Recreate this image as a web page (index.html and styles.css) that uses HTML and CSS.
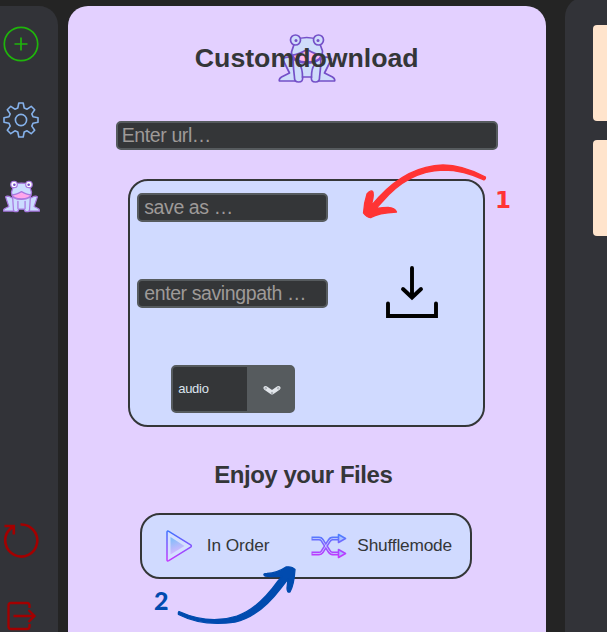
FILE: index.html
```html
<!DOCTYPE html>
<html lang="en">
<head>
<meta charset="utf-8">
<title>Customdownload</title>
<link rel="stylesheet" href="styles.css">
</head>
<body>
<svg class="defs" aria-hidden="true">
  <defs>
    <linearGradient id="violet" gradientUnits="userSpaceOnUse" x1="0" y1="0" x2="0" y2="30"><stop offset="0" stop-color="#3975ff"/><stop offset="1" stop-color="#c438ff"/></linearGradient>
    <linearGradient id="violet-short" gradientUnits="userSpaceOnUse" x1="0" y1="2" x2="0" y2="23"><stop offset="0" stop-color="#4b80ff"/><stop offset="1" stop-color="#c438ff"/></linearGradient>
    <linearGradient id="glow" x1="0" y1="0" x2="0.3" y2="1"><stop offset="0" stop-color="#77bdf8"/><stop offset="1" stop-color="#d9b8ff"/></linearGradient>
    <symbol id="frog" viewBox="0 0 57 49">
      <g fill="#cfdcfb" stroke="#7450c8" stroke-width="1.7" stroke-linejoin="round" stroke-linecap="round">
        <path d="M13 24C9 22 5 24 4 25l7 14-8 4q-3 2-2 4h17l1-17zM44 24c4-2 8 0 9 1l-7 14 8 4q3 2 2 4H39l-1-17z"/>
        <path d="M15 22c-1 10 1 19 1 22q0 4 4 4 5 0 4-5h9q-1 5 4 5 4 0 4-4c0-3 2-12 1-22z"/>
        <path d="M24 43c0-4 0-9-3-12M33 43c0-4 0-9 3-12" fill="none"/>
        <path d="M17 6q11-5 23 0l4 11q0 12-15.500 12T13 18z"/>
        <path d="M14 21q5 0 14.500-5.500Q38 21 43 21q-2 7-14.500 7T14 21z" fill="#ffb7ee"/>
        <circle cx="17" cy="6" r="5"/><circle cx="40" cy="6" r="5"/>
      </g>
      <circle cx="17.500" cy="6.500" r="1.500" fill="#7450c8"/><circle cx="39.500" cy="6.500" r="1.500" fill="#7450c8"/>
    </symbol>
    <symbol id="frog-light" viewBox="0 0 57 49">
      <g fill="#cbdcff" stroke="#a878e0" stroke-width="1.900" stroke-linejoin="round" stroke-linecap="round">
        <path d="M13 26C9 24 5 24 4 25l5 15-6 3q-3 2-2 4h17l1-17zM44 26c4-2 8-2 9-1l-5 15 6 3q3 2 2 4H39l-1-17z"/>
        <path d="M15 25c0 8 1 15 1 19q0 4 4 4 4 0 4-4h9q0 4 4 4 4 0 4-4c0-4 1-11 1-19z"/>
        <path d="M23 43V32M34 43V32" fill="none"/>
        <path d="M17 6q11-4 23 0l4 12q0 11-15.500 11T13 18z"/>
        <path d="M14 22q5 0 14.500-5Q38 22 43 22q-2 6-14.500 6T14 22z" fill="#ffa6ec"/>
        <circle cx="17" cy="6" r="5" fill="#fff"/><circle cx="40" cy="6" r="5" fill="#fff"/>
      </g>
      <circle cx="17.500" cy="6.500" r="2" fill="#7450c8"/><circle cx="39.500" cy="6.500" r="2" fill="#7450c8"/>
    </symbol>
  </defs>
</svg>

<div class="app">
  <nav class="sidebar">
    <svg class="icon" viewBox="0 0 36 36" fill="none" stroke="#1fb50b" stroke-width="1.700"><circle cx="18" cy="18" r="16.700"/><path d="M18 11.500v13M11.500 18h13"/></svg>
    <svg class="icon" viewBox="0 0 36 36" fill="none" stroke="#86b2eb" stroke-width="1.600" stroke-linejoin="round"><circle cx="18" cy="18" r="5.600"/><path d="M15.800 1h4.400l1 5 2.900 1.200 4.100-2.900 3.500 3.500-2.900 4.100L30 14.800l5 1v4.400l-5 1-1.200 2.900 2.900 4.100-3.500 3.500-4.100-2.900-2.900 1.200-1 5h-4.400l-1-5-2.900-1.200-4.100 2.900-3.500-3.500 2.900-4.100L6 21.200l-5-1v-4.400l5-1 1.200-2.900-2.900-4.100 3.500-3.500 4.100 2.900L14.800 6z"/></svg>
    <svg class="icon frog-small"><use href="#frog-light"/></svg>
    <svg class="icon restart" viewBox="0 0 36 36" fill="none" stroke="#a30000" stroke-width="2.600"><path d="M17.500 2.500A16 16 0 1 1 6 8.200L10.500 4M1.500 4h9.300V12.500"/></svg>
    <svg class="icon exit" viewBox="0 0 36 36" fill="none" stroke="#a30000" stroke-width="2.300"><path d="M26.500 8V5.500q0-2.500-2.500-2.500H8Q5.500 3 5.500 5.500v21Q5.500 29 8 29h16q2.500 0 2.500-2.500V24M10.500 16H32M25.500 10l6 6-6 6"/></svg>
  </nav>

  <main class="panel">
    <header class="title">
      <svg class="title-frog"><use href="#frog"/></svg>
      <h1>Customdownload</h1>
    </header>
    <input class="field url" placeholder="Enter url…" aria-label="url">
    <section class="download">
      <div class="form">
        <input class="field" placeholder="save as …" aria-label="file name">
        <input class="field path" placeholder="enter savingpath …" aria-label="path">
        <div class="combo">
          <span>audio</span>
          <div class="combo-btn"><svg width="18" height="11" viewBox="0 0 18 11" fill="none"><path d="M2.500 3l6.500 4.500L15.500 3" stroke="#e2e6eb" stroke-width="4" stroke-linecap="round" stroke-linejoin="round"/><g stroke="#7e858c" stroke-width=".6"><circle cx="2.800" cy="3.300" r=".8"/><circle cx="9" cy="8" r=".8"/><circle cx="15.200" cy="3.300" r=".8"/></g></svg></div>
        </div>
      </div>
      <svg class="save" viewBox="0 0 52 54" fill="none" stroke="#000" stroke-width="3.900" stroke-linecap="round"><path d="M26 2v28M17 23l9 8.500 9-8.500"/><path d="M2 37.500V50h48V37.500"/></svg>
    </section>
    <h2>Enjoy your Files</h2>
    <section class="modes">
      <div class="mode">
        <svg width="27" height="32" viewBox="0 0 27 32"><path d="M1 2.300Q1 .4 2.800 1.300L24.600 14.800q1.500 1.200 0 2.400L2.800 30.700Q1 31.600 1 29.700z" fill="#d4dfff" stroke="url(#violet)" stroke-width="1.500"/><path d="M4.500 7l14 9-14 8.500z" fill="url(#glow)"/></svg>
        <span>In Order</span>
      </div>
      <div class="mode shuffle">
        <svg width="36" height="26" viewBox="0 0 36 26" fill="none"><g stroke="url(#violet-short)" stroke-width="3.800"><path d="M.5 5.500H8q2 0 3 1.500l7 11q1.500 2.500 3.500 2.500H28M.5 20.500H8q2 0 3-1.500l7-11q1.500-2.500 3.500-2.500H28"/></g><g stroke="#ccd6ff" stroke-width=".8"><path d="M1.500 5.500H8q2 0 3 1.500l7 11q1.500 2.500 3.500 2.500H28M1.500 20.500H8q2 0 3-1.500l7-11q1.500-2.500 3.500-2.500H28"/></g><path d="M27.500 1.500l7 4-7 4zM27.500 16.500l7 4-7 4z" fill="#a9c2ff" stroke="url(#violet-short)" stroke-width="1.600" stroke-linejoin="round"/></svg>
        <span>Shufflemode</span>
      </div>
    </section>
  </main>

  <aside class="list"><div class="card"></div><div class="card"></div></aside>

  <svg class="arrows" viewBox="0 0 607 632" stroke-width="1.300" stroke-linejoin="round" aria-hidden="true">
    <path fill="#ff3434" stroke="#ff3434" d="M485.500 177Q462 165 443 165Q408 166 379 197L371 206Q374 197 373 192Q371 189 367 194Q364 203 363.500 213Q367 218 371 217.500Q378 213 396.500 212Q395 208 388 207.500Q383 207.500 376 208.500L382 202Q408 171 443 170Q464 170 484 180Q486 179 485.500 177Z"/>
    <path fill="#014baf" stroke="#014baf" d="M179 611.500Q209 625 237 616Q258 609 278 581L282 576.500Q272 577 265 576Q262 573.500 267 573.500Q277 573 286 567Q292 566 295 569.500Q294 585 290 592Q287 593 287 588L288 579L281 588Q259 617 235 622Q203 627 178.500 614.500Q178 612 179 611.500Z"/>
  </svg>
  <b class="step one">1</b>
  <b class="step two">2</b>
</div>
</body>
</html>
```
FILE: styles.css
```css
* { box-sizing: border-box; }
body { margin: 0; background: #242424; font-family: "Liberation Sans", Arial, sans-serif; color: #343638; }
.defs { position: absolute; width: 0; height: 0; }
.app { position: relative; display: flex; width: 607px; height: 632px; overflow: hidden; }
.sidebar { display: flex; flex-direction: column; gap: 40.5px; width: 58px; margin: 6px 10px 0 0; padding: 19.5px 0 0 3px; background: #323338; border-top-right-radius: 19px; flex: none; }
.icon { width: 36px; height: 36px; flex: none; }
.frog-small { width: 37px; height: 33px; margin-top: 1px; }
.restart { margin-top: 269px; }
.exit { margin-top: 1.5px; }
.panel { width: 477.5px; margin: 6px 19px 0 0; background: #e3d0ff; border-radius: 20px 20px 0 0; display: flex; flex-direction: column; align-items: center; flex: none; }
.title { display: grid; place-items: center; width: 100%; height: 49px; margin-top: 28px; }
.title > * { grid-area: 1 / 1; }
.title-frog { width: 58px; height: 49px; }
h1 { margin: -2px 0 0; font-size: 26.7px; line-height: 30px; letter-spacing: 0; z-index: 1; }
.field { display: block; width: 191px; height: 29px; margin: 0; padding: 0 5px; border: 2px solid #565b5e; border-radius: 5px; background: #343638; color: #dce4ee; font: 19.5px "Liberation Sans", Arial, sans-serif; letter-spacing: -.4px; outline: 0; }
.field::placeholder { color: #9e9a98; opacity: 1; }
.url { width: 382px; margin-top: 38px; padding-left: 4px; }
.download { display: flex; width: 357px; height: 248px; margin-top: 29px; padding: 12px 45px 0 7px; justify-content: space-between; background: #d0daff; border: 2px solid #343638; border-radius: 20px; }
.path { margin-top: 57px; }
.combo { display: flex; width: 124px; height: 48px; margin: 57px 0 0 34px; border: 2px solid #565b5e; border-radius: 5px; background: #343638; color: #dce4ee; font-size: 13px; letter-spacing: -.3px; align-items: center; justify-content: space-between; }
.combo span { padding: 0 0 2px 5px; }
.combo-btn { display: flex; width: 46px; height: 100%; padding-left: 3px; background: #565b5e; align-items: center; justify-content: center; }
.combo-btn svg { margin-top: 2px; }
.save { width: 52px; height: 54px; margin-top: 73px; }
h2 { margin: 33px 0 0; padding-right: 7px; font-size: 24px; line-height: 30px; letter-spacing: -.45px; }
.modes { display: flex; width: 332px; height: 66px; margin: 22.5px 2px 0 0; padding-left: 24px; align-items: center; background: #d0daff; border: 2px solid #343638; border-radius: 20px; }
.mode { display: flex; align-items: center; font-size: 17.3px; letter-spacing: -.1px; white-space: nowrap; }
.mode span { margin-left: 14px; }
.shuffle { margin-left: 42px; }
.shuffle span { margin-left: 10px; letter-spacing: -.2px; }
.list { flex: 1; margin-top: -3px; padding: 28px 0 0 28px; background: #323338; border-top-left-radius: 20px; }
.card { height: 96px; margin-bottom: 19px; background: #ffe4cc; border-radius: 4px 0 0 4px; }
.arrows { position: absolute; inset: 0; width: 607px; height: 632px; pointer-events: none; }
.step { position: absolute; font: 900 25px/30px Lato, sans-serif; }
.one { left: 495px; top: 185px; color: #ff3434; font: bold 23px/30px "DejaVu Sans", sans-serif; }
.two { left: 154px; top: 585px; color: #014baf; }
```
